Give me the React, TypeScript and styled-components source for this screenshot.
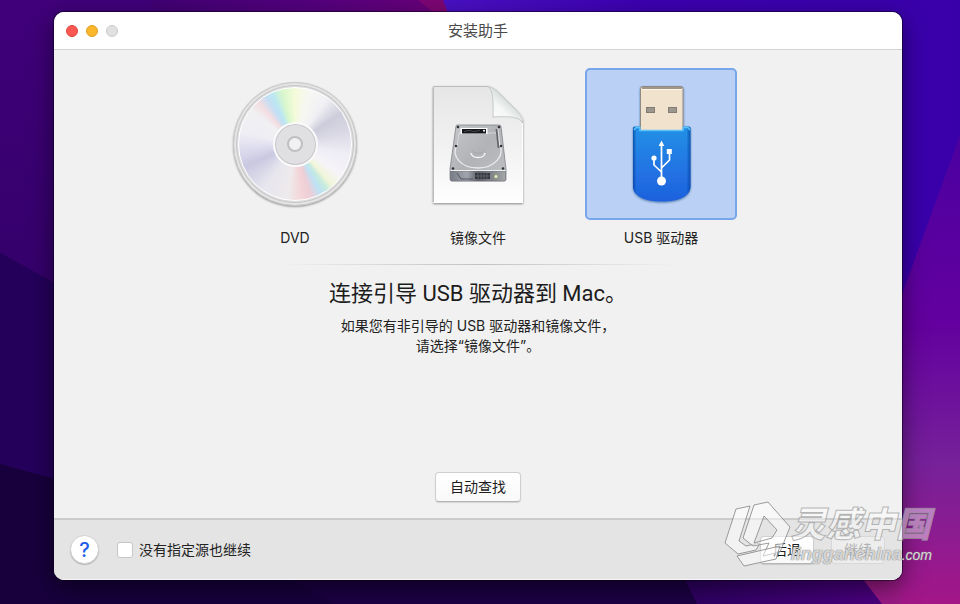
import React, { useState } from "react";
import styled, { createGlobalStyle, css } from "styled-components";

const GlobalStyle = createGlobalStyle`
  *, *::before, *::after { box-sizing: border-box; }
  body {
    margin: 0;
    background: #1b0043;
    font-family: Inter, "Noto Sans CJK SC", sans-serif;
    color: #222;
  }
  button, input { font-family: inherit; }
`;

const Desktop = styled.div`
  position: relative;
  isolation: isolate;
  display: flex;
  min-height: 100vh;
  padding: 12px 58px 24px 54px;
  overflow: hidden;
`;

const WallpaperArt = styled.svg`
  position: absolute;
  inset: 0;
  z-index: -1;
  width: 100%;
  height: 100%;
`;

const Window = styled.main`
  flex: 1;
  display: flex;
  flex-direction: column;
  min-width: 0;
  overflow: hidden;
  border-radius: 10px;
  background: #f1f1f1;
  box-shadow: 0 0 0 1px rgba(10, 0, 30, 0.55), 0 8px 24px rgba(0, 0, 0, 0.5);
`;

const TitleBar = styled.header`
  display: grid;
  grid-template-columns: 1fr auto 1fr;
  align-items: center;
  height: 38px;
  padding: 0 12px;
  background: #fff;
  border-bottom: 1px solid #d2d2d2;
`;

const Title = styled.h1`
  margin: 0;
  font-size: 15px;
  line-height: 20px;
  font-weight: 400;
  color: #4a4a4a;
`;

const WindowControls = styled.div`
  display: flex;
  gap: 8px;
`;

const Light = styled.button<{ $fill: string; $edge: string }>`
  width: 12px;
  height: 12px;
  padding: 0;
  border: 1px solid ${(p) => p.$edge};
  border-radius: 50%;
  background: ${(p) => p.$fill};
`;

const Content = styled.section`
  flex: 1;
  display: flex;
  flex-direction: column;
  align-items: center;
  padding: 18px 20px 16px;
`;

const Sources = styled.fieldset`
  display: flex;
  justify-content: center;
  gap: 31px;
  margin: 0;
  padding: 0;
  border: 0;
`;

const Source = styled.label`
  display: flex;
  flex-direction: column;
  gap: 8px;
  align-items: center;
  font-size: 14px;
  line-height: 20px;
`;

const SourceRadio = styled.input`
  position: absolute;
  width: 1px;
  height: 1px;
  margin: 0;
  opacity: 0;
`;

const Tile = styled.span<{ $selected: boolean }>`
  display: flex;
  align-items: center;
  justify-content: center;
  width: 152px;
  height: 152px;
  border: 2px solid transparent;
  border-radius: 5px;
  ${(p) =>
    p.$selected &&
    css`
      border-color: #78a6eb;
      background: #bad1f5;
    `}
`;

const Divider = styled.hr`
  width: 400px;
  max-width: 100%;
  height: 1px;
  margin: 16px 0 13px;
  border: 0;
  background: linear-gradient(90deg, transparent, #c2c2c2 50%, transparent);
`;

const Heading = styled.h2`
  margin: 0;
  font-family: Roboto, "Noto Sans CJK SC", sans-serif;
  font-size: 22px;
  line-height: 32px;
  font-weight: 400;
  color: #1c1c1c;
`;

const Hint = styled.p`
  margin: 6px 0 0;
  text-align: center;
  font-size: 14px;
  line-height: 20px;
`;

const PushButton = styled.button`
  height: 28px;
  padding: 0 12px;
  border: 1px solid #cfcfcf;
  border-bottom-color: #b4b4b4;
  border-radius: 4px;
  background: linear-gradient(#fff, #f9f9f9);
  box-shadow: 0 1px 1px rgba(0, 0, 0, 0.12);
  font-size: 14px;
  line-height: 20px;
  color: #1c1c1c;

  &:disabled {
    border-color: #d8d8d8;
    background: #ededed;
    box-shadow: none;
    color: #b0b0b0;
  }
`;

const FindButton = styled(PushButton)`
  height: 30px;
  padding: 0 14px;
  margin-top: auto;
`;

const Footer = styled.footer`
  display: flex;
  align-items: center;
  height: 62px;
  padding: 0 17px 0 16px;
  border-top: 2px solid #cbcbcb;
  border-bottom: 1px solid #f6f6f6;
  background: #e4e4e4;
`;

const HelpButton = styled.button`
  width: 29px;
  height: 29px;
  padding: 0;
  border: 1px solid #d0d0d0;
  border-radius: 50%;
  background: #fff;
  box-shadow: 0 1px 1px rgba(0, 0, 0, 0.2);
  font-size: 20px;
  line-height: 24px;
  font-weight: 500;
  color: #1d5be8;
`;

const CheckLabel = styled.label`
  display: flex;
  align-items: center;
  gap: 6px;
  margin-left: 18px;
  font-size: 14px;
  line-height: 20px;
`;

const CheckBox = styled.input`
  appearance: none;
  width: 16px;
  height: 16px;
  margin: 0;
  border: 1px solid #c6c6c6;
  border-radius: 3px;
  background: #fff;

  &:checked {
    border-color: #1d5be8;
    background: #3b7df0;
  }
`;

const Actions = styled.div`
  display: flex;
  gap: 17px;
  margin-left: auto;
`;

/* DVD */

const Disc = styled.span`
  display: grid;
  place-items: center;
  width: 124px;
  height: 124px;
  border-radius: 50%;
  background: #dcdcde;
  border: 1px solid #cacaca;
  box-shadow: inset 0 0 0 2px #e5e5e5, inset 0 0 0 3px #c9c9cb, 0 1px 2px rgba(0, 0, 0, 0.35);
`;

const DiscSurface = styled.span`
  display: grid;
  place-items: center;
  width: 114px;
  height: 114px;
  border: 1px solid #fff;
  border-radius: 50%;
  background: conic-gradient(
    #f4fbd9 0deg,
    #f7f7f2 14deg,
    #f1f1f5 35deg,
    #cdccdb 56deg,
    #d8d7e3 75deg,
    #eeedf6 100deg,
    #f6f4f7 125deg,
    #f1f5d8 138deg,
    #c5eadf 145deg,
    #bfe1f5 153deg,
    #edced6 163deg,
    #f3d4d8 172deg,
    #eeeaec 188deg,
    #e7e6ee 215deg,
    #c9c8e1 246deg,
    #dddcee 264deg,
    #efeef4 282deg,
    #f0eff1 308deg,
    #f3dde1 319deg,
    #c7def3 328deg,
    #bbe6f3 335deg,
    #d8f7cc 346deg,
    #f4fbd9 360deg
  );
`;

const DiscHub = styled.span`
  display: grid;
  place-items: center;
  width: 45px;
  height: 45px;
  border: 2px solid #fafafa;
  border-radius: 50%;
  background: #e0dfe2;
  box-shadow: inset 0 0 0 1px #c4c3c8;
`;

const DiscHole = styled.span`
  width: 16px;
  height: 16px;
  border: 2px solid #bfbfc2;
  border-radius: 50%;
  background: #f1f1f1;
`;

/* Watermark */

const Watermark = styled.div`
  position: absolute;
  right: 28px;
  bottom: 34px;
  display: flex;
  pointer-events: none;
`;

const WatermarkLogoArt = styled.svg`
  flex: none;
`;

const WatermarkText = styled.div`
  display: flex;
  flex-direction: column;
  margin-left: -4px;
  font-style: italic;
`;

const WatermarkName = styled.span`
  font-family: "Noto Sans CJK SC", sans-serif;
  font-size: 35px;
  line-height: 44px;
  font-weight: 900;
  color: rgba(255, 255, 255, 0.45);
  -webkit-text-stroke: 1px rgba(145, 145, 145, 0.65);
`;

const WatermarkUrl = styled.span`
  font-family: "Liberation Sans", sans-serif;
  font-size: 18px;
  line-height: 20px;
  font-weight: 700;
  color: rgba(255, 255, 255, 0.7);
  text-shadow: 0 0 1px #777, 0 0 1px #888;
`;

const WatermarkSuffix = styled.span`
  font-size: 14px;
  font-weight: 400;
`;

function Wallpaper() {
  return (
    <WallpaperArt viewBox="0 0 960 604" preserveAspectRatio="none" aria-hidden="true">
      <defs>
        <linearGradient id="left" x1="0" y1="0" x2="0" y2="1">
          <stop offset="0" stopColor="#40007a" />
          <stop offset="1" stopColor="#320067" />
        </linearGradient>
        <linearGradient id="top" x1="110" y1="0" x2="450" y2="0" gradientUnits="userSpaceOnUse">
          <stop offset="0" stopColor="#3b0070" />
          <stop offset="0.6" stopColor="#54007e" />
          <stop offset="1" stopColor="#6a0079" />
        </linearGradient>
        <linearGradient id="blue" x1="445" y1="0" x2="960" y2="0" gradientUnits="userSpaceOnUse">
          <stop offset="0" stopColor="#4910c3" />
          <stop offset="0.4" stopColor="#3c00b0" />
          <stop offset="1" stopColor="#3900aa" />
        </linearGradient>
        <linearGradient id="violet" x1="0" y1="0" x2="0" y2="1">
          <stop offset="0" stopColor="#4b00a0" />
          <stop offset="0.4" stopColor="#63009f" />
          <stop offset="0.7" stopColor="#762199" />
          <stop offset="1" stopColor="#a31688" />
        </linearGradient>
        <linearGradient id="dusk" x1="0" y1="0" x2="1" y2="0">
          <stop offset="0" stopColor="#2d0062" />
          <stop offset="1" stopColor="#4e0084" />
        </linearGradient>
      </defs>
      <rect width="960" height="604" fill="#1c0044" />
      <path d="M0 0H160V342L0 253Z" fill="url(#left)" />
      <path d="M0 253L160 342V508L0 464Z" fill="#24005b" />
      <path d="M0 464L160 508L335 604H0Z" fill="#18003d" />
      <path d="M150 0H450V30H162Z" fill="url(#top)" />
      <path d="M418 0H443L455 30Z" fill="#7d0674" />
      <path d="M443 0H960V604H900V30H455Z" fill="url(#blue)" />
      <path d="M680 570H900V604H697Z" fill="url(#dusk)" />
      <path d="M960 135L900 300V604H960Z" fill="url(#violet)" />
      <path d="M856 570H901V604H882Z" fill="#9b1a86" />
    </WallpaperArt>
  );
}

function DiscIcon() {
  return (
    <Disc>
      <DiscSurface>
        <DiscHub>
          <DiscHole />
        </DiscHub>
      </DiscSurface>
    </Disc>
  );
}

function ImageFileIcon() {
  return (
    <svg width="100" height="124" viewBox="428 82 100 124" aria-hidden="true">
      <defs>
        <linearGradient id="paper" x1="0" y1="0" x2="0" y2="1">
          <stop offset="0" stopColor="#e6e6e6" />
          <stop offset="0.5" stopColor="#f1f1f1" />
          <stop offset="1" stopColor="#fefefe" />
        </linearGradient>
        <linearGradient id="fold" x1="0" y1="1" x2="0.6" y2="0.3">
          <stop offset="0" stopColor="#fff" />
          <stop offset="0.6" stopColor="#f4f6f5" />
          <stop offset="1" stopColor="#cfd5d3" />
        </linearGradient>
        <linearGradient id="metal" x1="0" y1="0" x2="1" y2="1">
          <stop offset="0" stopColor="#c5c6ca" />
          <stop offset="0.5" stopColor="#b2b3b7" />
          <stop offset="1" stopColor="#bfc0c3" />
        </linearGradient>
        <linearGradient id="front" x1="0" y1="0" x2="1" y2="0">
          <stop offset="0" stopColor="#777b85" />
          <stop offset="0.3" stopColor="#a2a5ad" />
          <stop offset="0.5" stopColor="#5d6068" />
          <stop offset="1" stopColor="#a5a8aa" />
        </linearGradient>
        <filter id="paperShadow" x="-10%" y="-10%" width="120%" height="120%">
          <feDropShadow dx="0" dy="1" stdDeviation="1" floodColor="#000" floodOpacity="0.45" />
        </filter>
      </defs>
      <path d="M433.500 86.500H488C493 87 496 90 499 93L517 111C521 115 522.500 118 522.500 121V202.500H433.500Z" fill="url(#paper)" stroke="#fff" filter="url(#paperShadow)" />
      <path d="M433.500 202V86.500H488" fill="none" stroke="#bcbcbc" />
      <path d="M488 86.500C493 91 493.500 99 493 117C510 116 520 117 522.500 123C523 118 520 114 516 110L499 93C495 89 492 87 488 86.500Z" fill="url(#fold)" stroke="#b2b9b7" strokeWidth="0.700" />
      <path d="M456 126Q456 125 457.500 125H499Q501 125 501 126.500L506 169V179.500Q506 181 504 181H452Q450 181 450 179V169Z" fill="url(#metal)" stroke="#77797e" strokeWidth="0.700" />
      <path d="M450.500 171H505.500V179.500Q505.500 181 504 181H452Q450.500 181 450.500 179Z" fill="url(#front)" stroke="#686b70" strokeWidth="0.500" />
      <path d="M450.500 170.500H505.500" stroke="#eef0f2" />
      <path d="M475 173H490V179H475Z" fill="#34363c" />
      <path d="M478 173V179M481 173V179M484 173V179M487 173V179M475 176H490" stroke="#777a82" strokeWidth="0.600" />
      <path d="M457 173L461 179H473" fill="none" stroke="#53565f" />
      <circle cx="496" cy="176.500" r="2" fill="#e4e8c8" stroke="#7c8452" strokeWidth="0.600" />
      <path d="M457.500 144C450 157 462 168 478 168C494 168 506 156 499 143" fill="none" stroke="#e9eaec" strokeWidth="1.300" />
      <path d="M457.500 144L459 133H496L499 143" fill="none" stroke="#d7d8da" strokeWidth="0.900" />
      <path d="M471 153C472 159 484 159 485 153" fill="none" stroke="#f5f5f5" strokeWidth="1.500" />
      <path d="M472 151C475 154 481 154 484 151" fill="none" stroke="#a2a3a6" strokeWidth="0.700" />
      <rect x="460.500" y="128" width="27" height="6" fill="#fff" />
      <rect x="462" y="129" width="24" height="4.500" fill="#16171a" />
      <path d="M464 131.500L469 130.500L474 131.500L480 130.500" fill="none" stroke="#50535b" strokeWidth="0.800" />
      <circle cx="484" cy="130.800" r="1" fill="#fff" />
      <path d="M496.500 129L498.500 148" stroke="#62646a" strokeWidth="1.800" />
      <path d="M498 129L500 147" stroke="#f0f0f0" strokeWidth="0.700" />
      <g fill="#303238">
        <circle cx="458" cy="127" r="1.300" /><circle cx="499" cy="127" r="1.300" />
        <circle cx="456" cy="146" r="1.300" /><circle cx="501" cy="146" r="1.300" />
        <circle cx="453" cy="168.500" r="1.300" /><circle cx="503" cy="168.500" r="1.300" />
      </g>
    </svg>
  );
}

function UsbIcon() {
  return (
    <svg width="70" height="124" viewBox="626 82 70 124" aria-hidden="true">
      <defs>
        <linearGradient id="usbBody" x1="0" y1="0" x2="0" y2="1">
          <stop offset="0" stopColor="#2491e5" />
          <stop offset="0.6" stopColor="#2272e3" />
          <stop offset="1" stopColor="#1c61dc" />
        </linearGradient>
        <linearGradient id="usbEdge" x1="0" y1="0" x2="1" y2="0">
          <stop offset="0" stopColor="#003b99" stopOpacity="0.7" />
          <stop offset="0.060" stopColor="#003b99" stopOpacity="0" />
          <stop offset="0.930" stopColor="#003b99" stopOpacity="0" />
          <stop offset="1" stopColor="#003b99" stopOpacity="0.7" />
        </linearGradient>
        <filter id="usbShadow" x="-15%" y="-10%" width="130%" height="120%">
          <feDropShadow dx="0" dy="1" stdDeviation="1" floodColor="#183a73" floodOpacity="0.6" />
        </filter>
      </defs>
      <g filter="url(#usbShadow)">
        <path d="M640.500 131V88.500Q640.500 86.500 642.500 86.500H681Q683 86.500 683 88.500V131Z" fill="#f0e2cc" stroke="#8f8a84" />
        <path d="M642 88H682" stroke="#504b45" />
        <path d="M642 89.500H682" stroke="#fff8ea" />
        <path d="M633 128Q633 126.500 635 126.500H640V130H683V126.500H688.500Q690.500 126.500 690.500 128V186C690.500 196 680 201.500 662 201.500C644 201.500 633 196 633 186Z" fill="url(#usbBody)" />
      </g>
      <path d="M633 128Q633 126.500 635 126.500H640V130H683V126.500H688.500Q690.500 126.500 690.500 128V186C690.500 196 680 201.500 662 201.500C644 201.500 633 196 633 186Z" fill="url(#usbEdge)" />
      <path d="M634 130L636 127.500H640V130.500H683V127.500H688L690 130" fill="none" stroke="#5dc2fc" strokeWidth="1.500" />
      <rect x="646.500" y="107.500" width="8" height="5" fill="#9b968e" stroke="#827c73" />
      <rect x="668.500" y="107.500" width="8" height="5" fill="#9b968e" stroke="#827c73" />
      <g fill="none" stroke="#fff" strokeWidth="1.700" strokeLinejoin="round">
        <path d="M661.500 181V144M661.500 172L654 165V158M661.500 168L669.500 160V152" />
      </g>
      <g fill="#fff">
        <circle cx="661.500" cy="181" r="4.500" />
        <circle cx="654" cy="158" r="2.600" />
        <rect x="666.800" y="149" width="5" height="5" />
        <path d="M661.500 140.500L664.300 146H658.700Z" />
      </g>
    </svg>
  );
}

function WatermarkLogo() {
  return (
    <WatermarkLogoArt width="72" height="70" viewBox="722 497 72 70" aria-hidden="true">
      <g fill="#fff" fillOpacity="0.5" stroke="#858585" strokeOpacity="0.8" strokeLinejoin="round">
        <path d="M735 506L749 503L738 538L745 543L759 540L755 547L737 551L724 540Z" />
        <path
          fillRule="evenodd"
          d="M753 502L767 499L789 524L779 549L762 553L768 540L752 543L742 535ZM763 513L753 540L771 535L776 527Z"
        />
        <path d="M736 553L779 543L775 556L743 563Z" />
      </g>
    </WatermarkLogoArt>
  );
}

const sources = [
  { id: "dvd", label: "DVD", Icon: DiscIcon },
  { id: "image", label: "镜像文件", Icon: ImageFileIcon },
  { id: "usb", label: "USB 驱动器", Icon: UsbIcon },
];

export default function App() {
  const [source, setSource] = useState("usb");
  const [skipSource, setSkipSource] = useState(false);

  return (
    <>
      <GlobalStyle />
      <Desktop>
        <Wallpaper />
        <Window>
          <TitleBar>
            <WindowControls>
              <Light $fill="#fb5753" $edge="#e2463f" aria-label="关闭" />
              <Light $fill="#fbb72b" $edge="#dea023" aria-label="最小化" />
              <Light $fill="#e1e1e1" $edge="#cbcbcb" aria-label="缩放" disabled />
            </WindowControls>
            <Title>安装助手</Title>
          </TitleBar>
          <Content>
            <Sources aria-label="安装源">
              {sources.map(({ id, label, Icon }) => (
                <Source key={id}>
                  <SourceRadio
                    type="radio"
                    name="source"
                    value={id}
                    checked={source === id}
                    onChange={() => setSource(id)}
                  />
                  <Tile $selected={source === id}>
                    <Icon />
                  </Tile>
                  {label}
                </Source>
              ))}
            </Sources>
            <Divider />
            <Heading>连接引导 USB 驱动器到 Mac。</Heading>
            <Hint>
              如果您有非引导的 USB 驱动器和镜像文件，
              <br />
              请选择“镜像文件”。
            </Hint>
            <FindButton type="button">自动查找</FindButton>
          </Content>
          <Footer>
            <HelpButton type="button" aria-label="帮助">?</HelpButton>
            <CheckLabel>
              <CheckBox
                type="checkbox"
                checked={skipSource}
                onChange={(e) => setSkipSource(e.target.checked)}
              />
              没有指定源也继续
            </CheckLabel>
            <Actions>
              <PushButton type="button">后退</PushButton>
              <PushButton type="button" disabled>继续</PushButton>
            </Actions>
          </Footer>
        </Window>
        <Watermark>
          <WatermarkLogo />
          <WatermarkText>
            <WatermarkName>灵感中国</WatermarkName>
            <WatermarkUrl>
              lingganchina<WatermarkSuffix>.com</WatermarkSuffix>
            </WatermarkUrl>
          </WatermarkText>
        </Watermark>
      </Desktop>
    </>
  );
}
